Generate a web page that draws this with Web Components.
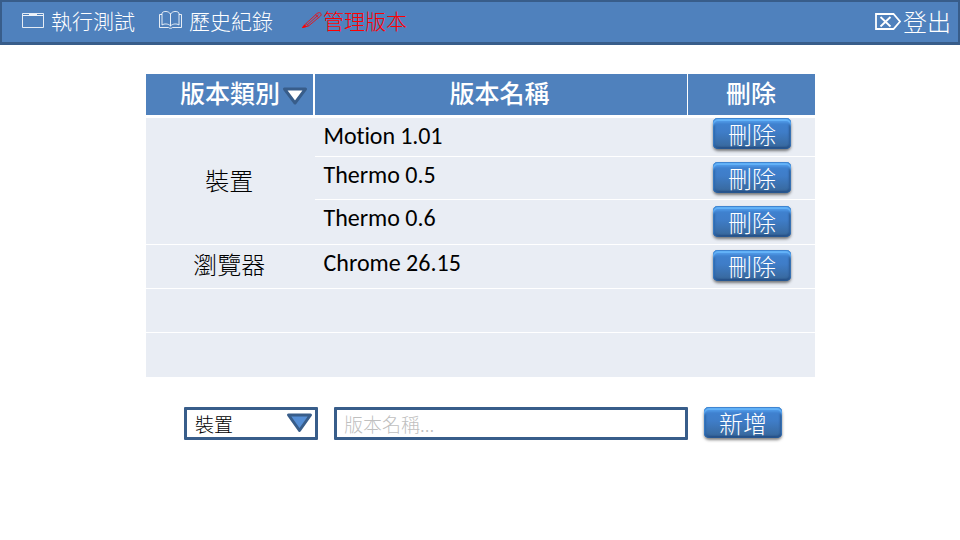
<!DOCTYPE html>
<html lang="zh-Hant">
<head>
<meta charset="utf-8">
<title>管理版本</title>
<style>
html,body{margin:0;width:960px;height:540px;overflow:hidden;background:#fff;font-family:"Noto Sans CJK TC",sans-serif;font-weight:300}
</style>
</head>
<body>
<version-page></version-page>
<script>
const define=(name,html)=>{
  const t=document.createElement('template');
  t.innerHTML=html;
  customElements.define(name,class extends HTMLElement{
    constructor(){super();this.attachShadow({mode:'open'}).append(t.content.cloneNode(true));}
  });
};

define('app-bar',`<style>
:host{display:flex;box-sizing:border-box;height:45px;border:2px solid #385d8a;border-bottom-width:3px;background:#4f81bd;color:#fff;padding-left:20px;padding-right:7px;align-items:flex-start}
.end{margin-left:auto}
</style><slot></slot><div class="end"><slot name="end"></slot></div>`);

define('nav-item',`<style>
:host{display:flex;font-size:21px;line-height:28px;height:30px;white-space:nowrap;padding-top:4px}
::slotted(svg){display:block;flex:none}
</style><slot name="icon"></slot><span><slot></slot></span>`);

define('gloss-button',`<style>
:host{display:block;width:78px;height:32px}
button{display:block;box-sizing:border-box;width:78px;height:31px;padding:0;border:0;border-radius:5px;color:#fff;font:inherit;font-size:24px;line-height:31px;text-align:center;
background:linear-gradient(#3f83d3,#3f7dc8 45%,#376698);
box-shadow:inset 0 1px 1px #3b80cc,inset 0 3px 1px #66b5fb,inset 0 5px 2px #4c94e2,inset 2px 0 2px #2c66aa,inset -2px 0 2px #2b5993,inset 0 -2px 2px #254d80,0 2px 3px rgba(0,0,0,.5)}
</style><button><slot></slot></button>`);

define('head-cell',`<style>
:host{display:flex;justify-content:center;align-items:flex-start;background:#4f81bd;color:#fff;font-weight:500;font-size:25px;line-height:37px;box-sizing:border-box;white-space:nowrap}
</style><slot></slot>`);

define('data-cell',`<style>
:host{display:flex;box-sizing:border-box;background:#e9edf4;color:#000;font-size:24px;line-height:30px;white-space:nowrap}
:host([kind=category]){justify-content:center;align-items:center}
:host([kind=name]){font-family:Carlito,Calibri,Lato,sans-serif;font-weight:400;font-size:24px;padding-left:9px;align-items:center;font-variant-ligatures:none}
:host([kind=action]){justify-content:center}
</style><slot></slot>`);

define('select-box',`<style>
:host{display:flex;box-sizing:border-box;width:134px;height:33px;border:3px solid #385d8a;border-radius:1px;padding:0 1px 0 8px;justify-content:space-between;font-size:19px;line-height:27px;background:#fff;color:#000}
svg{display:block;flex:none;margin-top:2px}
</style><slot></slot><svg width="28" height="22" viewBox="0 0 28 22"><path d="M2.5 3H24.5L13.5 18.5Z" fill="#558ed5" stroke="#385d8a" stroke-width="3" stroke-linejoin="round"/></svg>`);

define('text-box',`<style>
:host{display:block;box-sizing:border-box;width:354px;height:33px;border:3px solid #385d8a;border-radius:1px;padding-left:7px;font-size:19px;line-height:27px;background:#fff;color:#bfbfbf}
</style><slot></slot>`);

define('version-table',`<style>
:host{display:grid;width:669px;height:303px;grid-template-columns:167px 372px 127px;column-gap:1.5px;grid-template-rows:40.5px 40px 41.5px 43.5px 43px 42.5px 43.5px;row-gap:1.4px;background:#fff}
.l,.m{margin-right:-1.5px}.first{margin-top:2.5px}
svg{display:block;margin:11px 0 0 1px}
.sort{justify-content:flex-start;padding-left:34px}
gloss-button{margin-left:1px}
</style>
<head-cell class="sort">版本類別<svg width="28" height="22" viewBox="0 0 28 22"><path d="M3.5 4H24.5L14 18Z" fill="#fff" stroke="#385d8a" stroke-width="3" stroke-linejoin="round"/></svg></head-cell><head-cell style="padding-right:2px">版本名稱</head-cell><head-cell style="padding-right:1px">刪除</head-cell>
<data-cell class="l first" kind="category" style="grid-row:2 / span 3;padding:0 2px 2px 0">裝置</data-cell>
<data-cell class="m first" kind="name" style="padding-bottom:3px;letter-spacing:-.1px">Motion 1.01</data-cell><data-cell class="first" kind="action"><gloss-button>刪除</gloss-button></data-cell>
<data-cell class="m" kind="name" style="padding-bottom:6px">Thermo 0.5</data-cell><data-cell kind="action" style="padding-top:5px"><gloss-button>刪除</gloss-button></data-cell>
<data-cell class="m" kind="name" style="padding-bottom:7px">Thermo 0.6</data-cell><data-cell kind="action" style="padding-top:6px"><gloss-button>刪除</gloss-button></data-cell>
<data-cell class="l" kind="category" style="padding:0 2px 5px 0">瀏覽器</data-cell><data-cell class="m" kind="name" style="padding-bottom:7px">Chrome 26.15</data-cell><data-cell kind="action" style="padding-top:5px"><gloss-button>刪除</gloss-button></data-cell>
<data-cell class="l"></data-cell><data-cell class="m"></data-cell><data-cell></data-cell>
<data-cell class="l"></data-cell><data-cell class="m"></data-cell><data-cell></data-cell>`);

define('version-page',`<style>
:host{display:block;width:960px;height:540px}
version-table{margin:29px 0 0 146px}
.form{display:flex;margin:30px 0 0 184px}
text-box{margin-left:16px}.form gloss-button{margin-left:16px}
nav-item+nav-item{margin-left:23px}
</style>
<app-bar>
<nav-item><svg slot="icon" width="29" height="30" viewBox="22 6 29 30" fill="none" stroke="#fff"><path d="M22.5 13.5H43.5V27.5H22.5Z" stroke-opacity=".85"/><path d="M23 15.5H43M29 14.5H37" stroke-opacity=".9"/></svg>執行測試</nav-item>
<nav-item><svg slot="icon" width="31" height="30" viewBox="158 6 31 30" fill="none" stroke="#fff" stroke-width="1" stroke-opacity=".85"><path d="M170.5 14C168.5 10.8 163.5 10.8 162 13V25C164.5 23.3 168.5 23.7 170.5 26C172.5 23.7 176.5 23.3 179 25V13C177.5 10.8 172.5 10.8 170.5 14V26M162 14.5H159.5V27.5H168.5C169 28.5 172 28.5 172.5 27.5H181.5V14.5H179"/></svg>歷史紀錄</nav-item>
<nav-item style="color:#f00;margin-left:29px"><svg slot="icon" width="21" height="30" viewBox="302 6 21 30" fill="none" stroke="#f00" stroke-width="1" stroke-opacity=".8"><path d="M302.5 27.5L306 23.5L317 13.5C319.5 11.5 322.5 13.5 320.5 16L308.5 26L302.5 27.5M306 23.5L308.5 26M307.3 24.8L318.5 14.8M315.5 14.7L318.5 17.6"/><path d="M302.5 27.5L304.5 25L306.5 26.5Z" fill="#f00"/></svg>管理版本</nav-item>
<nav-item slot="end" style="font-size:24px;padding-top:5px"><svg slot="icon" width="29" height="30" viewBox="874 7 29 30" fill="none" stroke="#fff" stroke-width="1.8"><path d="M876 14H893.5L900 21.5L893.5 29H876ZM880.5 17L890.5 26.5M890.5 17L880.5 26.5"/></svg>登出</nav-item>
</app-bar>
<version-table></version-table>
<div class="form"><select-box>裝置</select-box><text-box>版本名稱...</text-box><gloss-button>新增</gloss-button></div>`);
</script>
</body>
</html>
